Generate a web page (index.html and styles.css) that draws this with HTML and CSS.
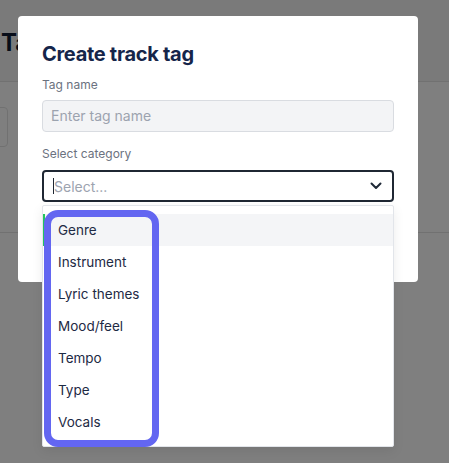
FILE: index.html
```html
<!DOCTYPE html>
<html>
<head>
<meta charset="utf-8">
<link rel="stylesheet" href="styles.css">
</head>
<body>
<div class="page">
  <header class="page-header"><h1 class="page-title">Tags</h1></header>
  <div class="page-body">
    <div class="toolbar"><span class="ghost-btn"></span></div>
    <div class="divider"></div>
  </div>
  <div class="overlay"></div>
</div>

<div class="modal">
  <h2 class="modal-title">Create track tag</h2>
  <label class="field-label">Tag name</label>
  <div class="text-input">Enter tag name</div>
  <label class="field-label second">Select category</label>
  <div class="select-wrap">
    <div class="select">
      <span class="caret"></span><span class="placeholder">Select...</span>
      <svg class="chevron" width="12" height="8" viewBox="0 0 12 8"><path d="M1.5 1.5 L6 6 L10.5 1.5" fill="none" stroke="#1f2937" stroke-width="2" stroke-linecap="round" stroke-linejoin="round"/></svg>
    </div>
    <div class="menu">
      <div class="option active">Genre</div>
      <div class="option">Instrument</div>
      <div class="option">Lyric themes</div>
      <div class="option">Mood/feel</div>
      <div class="option">Tempo</div>
      <div class="option">Type</div>
      <div class="option">Vocals</div>
      <div class="highlight"></div>
    </div>
  </div>
  <div class="actions"><span class="btn-create"></span></div>
</div>
</body>
</html>
```
FILE: styles.css
```css
html, body {
  margin: 0;
  padding: 0;
  width: 449px;
  height: 463px;
  overflow: hidden;
  font-family: Inter, "Noto Sans", sans-serif;
}
.page {
  position: relative;
  width: 449px;
  height: 463px;
  background: #ffffff;
}
.page-header {
  height: 82px;
  background: #f4f5f4;
  border-bottom: 1px solid #e2e2e2;
  box-sizing: border-box;
  padding-top: 28px;
}
.page-title {
  margin: 0 0 0 1px;
  font-size: 24px;
  font-weight: 700;
  color: #0f1b33;
  line-height: 30px;
}
.page-body {
  padding-top: 25px;
}
.toolbar {
  height: 40px;
}
.ghost-btn {
  display: block;
  margin-left: -8px;
  width: 14px;
  height: 38px;
  border: 1px solid #e2e2e2;
  border-radius: 4px;
}
.divider {
  margin-top: 85px;
  border-top: 1px solid #e2e2e2;
}
.overlay {
  position: absolute;
  inset: 0;
  background: rgba(0, 0, 0, 0.5);
}
.modal {
  position: absolute;
  left: 18px;
  top: 16px;
  width: 400px;
  height: 266px;
  box-sizing: border-box;
  padding: 24px 24px 0;
  background: #fff;
  border-radius: 4px;
}
.modal-title {
  margin: 0;
  font-size: 20px;
  line-height: 28px;
  font-weight: 700;
  color: #15254a;
  letter-spacing: -0.3px;
}
.field-label {
  display: block;
  margin-top: 9px;
  font-size: 12px;
  line-height: 16px;
  color: #6b7280;
}
.field-label.second {
  margin-top: 14px;
}
.text-input {
  margin-top: 7px;
  height: 32px;
  box-sizing: border-box;
  border: 1px solid #d9dce1;
  border-radius: 4px;
  background: #f3f4f6;
  padding: 0 8px;
  font-size: 14px;
  line-height: 30px;
  color: #9ca3af;
}
.select-wrap {
  position: relative;
  margin-top: 8px;
}
.select {
  display: flex;
  align-items: center;
  height: 32px;
  box-sizing: border-box;
  border: 2px solid #1f2733;
  border-radius: 4px;
  padding: 0 8px 0 9px;
  font-size: 14px;
  color: #9ca3af;
}
.caret {
  width: 1px;
  height: 16px;
  background: #1f2733;
}
.placeholder {
  flex: 1;
}
.chevron {
  margin-right: 2px;
}
.menu {
  position: absolute;
  left: 0;
  right: 0;
  top: 35px;
  padding: 8px 0;
  background: #fff;
  border: 1px solid #e2e5ea;
  border-radius: 2px;
  box-shadow: 0 4px 12px rgba(0,0,0,0.08);
  z-index: 2;
}
.option {
  height: 32px;
  line-height: 32px;
  padding-left: 15px;
  font-size: 13.5px;
  color: #1e2a44;
}
.option.active {
  background: #f4f5f7;
  box-shadow: inset 2px 0 0 #22c55e;
}
.highlight {
  position: absolute;
  left: 1px;
  top: 4px;
  width: 115px;
  height: 237px;
  box-sizing: border-box;
  border: 7px solid #6366f1;
  border-radius: 14px;
}
.actions {
  margin-top: 12px;
}
.btn-create {
  display: block;
  width: 80px;
  height: 32px;
  background: #22c55e;
  border-radius: 4px;
}
```
